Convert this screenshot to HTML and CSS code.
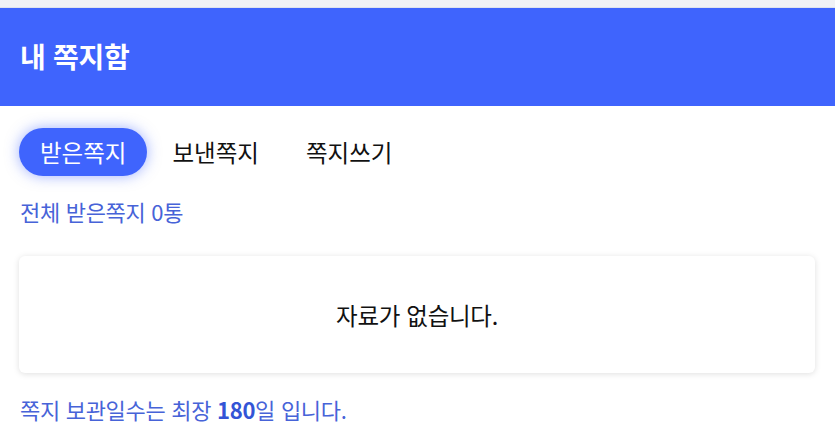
FILE: index.html
```html
<!DOCTYPE html>
<html lang="ko">
<head>
<meta charset="utf-8">
<title>내 쪽지함</title>
<link rel="stylesheet" href="styles.css">
</head>
<body>
<div class="topbar"></div>
<header class="header"><h1 class="title">내 쪽지함</h1></header>
<main class="content">
  <nav class="tabs">
    <a class="tab active">받은쪽지</a>
    <a class="tab">보낸쪽지</a>
    <a class="tab">쪽지쓰기</a>
  </nav>
  <p class="count">전체 받은쪽지 0통</p>
  <div class="card">자료가 없습니다.</div>
  <p class="note">쪽지 보관일수는 최장 <b>180</b>일 입니다.</p>
</main>
</body>
</html>
```
FILE: styles.css
```css
* { box-sizing: border-box; }
html, body { margin: 0; padding: 0; background: #fff; }
body {
  font-family: "Noto Sans CJK KR", "Noto Sans", sans-serif;
  width: 835px;
  height: 434px;
  overflow: hidden;
}
.topbar {
  height: 8px;
  background: #f1f2f6;
  border-bottom: 1px solid #dfe3ee;
}
.header {
  height: 98px;
  background: #3f64fd;
  display: flex;
  align-items: center;
  padding: 0 20px 2px;
}
.title {
  margin: 0;
  color: #fff;
  font-size: 28px;
  font-weight: 700;
  letter-spacing: -0.3px;
}
.content { padding: 22px 20px 0 19px; }
.tabs { display: flex; gap: 3px; align-items: center; }
.tab {
  height: 48px;
  padding: 0 21px;
  display: flex;
  align-items: center;
  font-size: 23.5px;
  color: #111;
  border-radius: 24px;
}
.tab.active {
  background: #3f64fd;
  color: #fff;
  box-shadow: 0 0 14px rgba(63, 100, 253, 0.5);
}
.tab + .tab { padding: 0 22px; }
.count {
  margin: 20px 0 0 1px;
  font-size: 22px;
  line-height: 30px;
  color: #4763d8;
  letter-spacing: -0.3px;
}
.card {
  margin-top: 30px;
  height: 117px;
  background: #fff;
  border-radius: 6px;
  box-shadow: 0 1px 6px rgba(0, 0, 0, 0.13);
  display: flex;
  align-items: center;
  justify-content: center;
  font-size: 23.5px;
  color: #111;
  letter-spacing: -0.3px;
}
.note {
  margin: 21px 0 0 1px;
  font-size: 22px;
  line-height: 30px;
  color: #4763d8;
  letter-spacing: -0.3px;
}
.note b { font-weight: 700; color: #3354d6; }
```
